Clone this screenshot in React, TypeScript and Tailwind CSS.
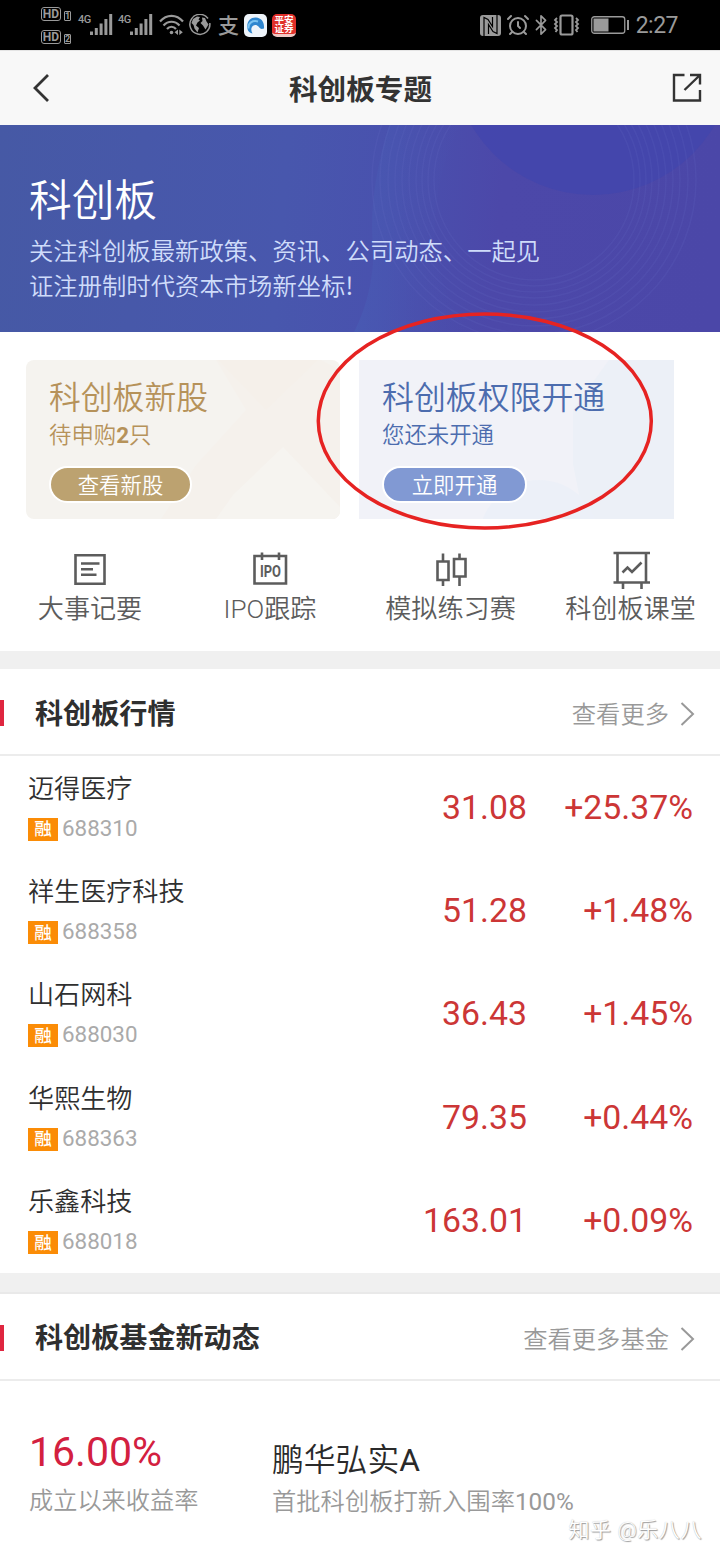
import type { ReactNode } from 'react';
import { AlarmClock, Bluetooth } from 'lucide-react';

interface Stock {
  name: string;
  code: string;
  price: string;
  change: string;
}

const stocks: Stock[] = [
  { name: '迈得医疗', code: '688310', price: '31.08', change: '+25.37%' },
  { name: '祥生医疗科技', code: '688358', price: '51.28', change: '+1.48%' },
  { name: '山石网科', code: '688030', price: '36.43', change: '+1.45%' },
  { name: '华熙生物', code: '688363', price: '79.35', change: '+0.44%' },
  { name: '乐鑫科技', code: '688018', price: '163.01', change: '+0.09%' },
];

const rings = [100, 106, 112, 118, 125, 132, 139, 146, 154, 162];

function HdBadge({ sim }: { sim: string }) {
  return (
    <div className="flex h-[14px] items-end gap-[3px]">
      <span className="flex h-[14px] w-5 items-center justify-center rounded-[3px] border-[1.5px] border-[#9a9a9a] text-[12px] leading-none font-bold">HD</span>
      <span className="flex h-[10px] w-[7px] items-center justify-center rounded-[1px] border border-[#9a9a9a] text-[9px] leading-none font-bold">{sim}</span>
    </div>
  );
}

function Signal() {
  return (
    <div className="flex h-[22px] w-[35px]">
      <span className="w-3 shrink-0 text-[11px] leading-[11px] font-medium tracking-[-0.5px]">4G</span>
      <svg className="h-[22px] w-[23px] shrink-0" viewBox="0 0 23 22" fill="#9a9a9a">
        <rect x="0" y="17.5" width="3" height="3.5" />
        <rect x="4.8" y="14" width="3" height="7" />
        <rect x="9.6" y="9.5" width="3" height="11.5" />
        <rect x="14.4" y="5" width="3" height="16" />
        <rect x="19.2" y="0" width="3" height="21" />
      </svg>
    </div>
  );
}

function StatusBar() {
  return (
    <div className="flex h-[50px] items-start bg-black font-normal text-[#9a9a9a]">
      <div className="mt-[7px] ml-[41px] flex w-[37px] flex-col gap-[9px]">
        <HdBadge sim="1" />
        <HdBadge sim="2" />
      </div>
      <div className="mt-[14px] flex gap-[5px]">
        <Signal />
        <Signal />
      </div>
      {/* wifi */}
      <svg className="mt-[13px] ml-[6px] h-6 w-[25px]" viewBox="0 0 25 24" fill="none" stroke="#9a9a9a" strokeWidth="2.200">
        <path d="M1 8.500C7.500 1 17.500 1 24 8.500M4.500 12.500C9 7.500 16 7.500 20.500 12.500M8 16C10.500 13 14.500 13 17 16" />
        <circle cx="12.500" cy="19.500" r="1.800" fill="#9a9a9a" stroke="none" />
        <path d="M19 16.500v5.500l-3.500-2.750zM20.300 16.500v5.500l3.500-2.750z" fill="#9a9a9a" stroke="none" />
      </svg>
      {/* globe */}
      <svg className="mt-[14px] ml-[5px] h-[22px] w-[22px]" viewBox="0 0 22 22" fill="none" stroke="#9a9a9a" strokeWidth="1.500">
        <path d="M19 4.500A10 10 0 1 0 20.800 9" />
        <path d="M4 5l4-2.500 3 .5-1.500 2.500 1.500 1-2.500 2-1.500 3 3 2.500-1.500 4.500-3-4-1-3.500-2-2zM13 3.500l3 .5 1.500 3.500 2 3-3 5-2.500-4-2.500-2.500 2-2z" fill="#9a9a9a" stroke="none" />
      </svg>
      <span className="mt-[15px] ml-[7px] w-[22px] text-[21px] leading-[22px] font-medium">支</span>
      <span className="mt-[14px] ml-1 flex h-[23px] w-[23px] items-center justify-center rounded-[5px] bg-[#eef4fa]">
        <svg className="h-[19px] w-[19px]" viewBox="0 0 19 19">
          <path d="M1.500 13C0 5 5 1 10 1.500 15.500 2 18.500 6 18 12.500 15 13.500 14 12.500 12.500 10.500 10.500 8 6.500 8.500 5.500 12 5 14 5.500 15.500 6.500 17.500 4 17 2 15.500 1.500 13z" fill="#2f86cf" />
          <path d="M2.500 12.500C2 7 6.500 4 12 5.500" fill="none" stroke="#7cc4f2" strokeWidth="2" />
        </svg>
      </span>
      <span className="mt-[14px] ml-[5px] flex h-[23px] w-6 flex-col items-center rounded-[5px] border-b-[3px] border-[#f0c8c4] bg-[#e0302a] pt-[1px] text-[9.500px] leading-[9px] font-bold text-white">
        <span>平安</span>
        <span>证券</span>
      </span>

      <div className="mt-[13px] mr-[42px] ml-auto flex h-6 items-center">
        {/* nfc */}
        <svg className="mr-[2px] h-[21px] w-[21px]" viewBox="0 0 21 21">
          <rect width="21" height="21" rx="3" fill="#9a9a9a" />
          <path d="M4 21V2.500L8 4.500l4.500 7V2M17 0v18.500l-4-2L8.500 9.500V19" fill="none" stroke="#000" strokeWidth="1.200" />
        </svg>
        <AlarmClock className="ml-[3px] h-6 w-6" strokeWidth={2} />
        <Bluetooth className="ml-0 h-6 w-[22px]" strokeWidth={1.8} />
        {/* vibrate */}
        <svg className="ml-px h-[22px] w-7" viewBox="0 0 28 22" fill="none" stroke="#9a9a9a">
          <rect x="7.500" y="1.500" width="12" height="19" rx="1.500" strokeWidth="2.200" />
          <path d="M4 4l-2 2 2 2-2 2 2 2-2 2 2 2-1.500 2M23 4l2 2-2 2 2 2-2 2 2 2-2 2 1.500 2" strokeWidth="1.800" />
        </svg>
        {/* battery */}
        <svg className="ml-[10px] h-[18px] w-[39px]" viewBox="0 0 39 18">
          <rect x=".75" y=".75" width="33" height="16.500" rx="2.500" fill="none" stroke="#9a9a9a" strokeWidth="1.300" />
          <rect x="2.500" y="2.500" width="15" height="13" fill="#9a9a9a" />
          <rect x="36" y="4" width="2" height="10" fill="#9a9a9a" />
        </svg>
        <span className="ml-[6px] pt-[2px] text-[23px] leading-6 tracking-[-0.5px]">2:27</span>
      </div>
    </div>
  );
}

function TitleBar() {
  return (
    <header className="flex h-[75px] items-center border-t border-[#e4e4e4] bg-[#f8f8f8] pr-[18px] pl-[33px]">
      <svg className="mb-px h-7 w-[29px]" viewBox="0 0 29 28" fill="none" stroke="#333" strokeWidth="2.800">
        <path d="M15 1L2 14l13 13" />
      </svg>
      <h1 className="flex-1 pt-[3px] pr-[13px] text-center text-[28.600px] leading-[40px] font-bold text-[#333]">科创板专题</h1>
      <svg className="mb-px h-[29px] w-[30px]" viewBox="0 0 30 29" fill="none" stroke="#333" strokeWidth="2.400">
        <path d="M12.500 2H2v25.500h26V17M18 2h10v9.500M28 2L12.500 17" />
      </svg>
    </header>
  );
}

function Hero() {
  return (
    <section className="relative h-[207px] overflow-hidden bg-[#4857a9]">
      <svg className="absolute inset-0 h-full w-full" viewBox="0 0 720 207">
        <defs>
          <linearGradient id="sky" x1="0" y1="0" x2="720" y2="60" gradientUnits="userSpaceOnUse">
            <stop offset="0" stopColor="#4659a5" />
            <stop offset="0.400" stopColor="#4857ad" />
            <stop offset="0.550" stopColor="#4951ae" />
            <stop offset="0.700" stopColor="#4c48a9" />
            <stop offset="1" stopColor="#4b47a8" />
          </linearGradient>
          <linearGradient id="edge" x1="0" y1="0" x2="1" y2="0">
            <stop offset="0" stopColor="#4862b8" stopOpacity="0.450" />
            <stop offset="1" stopColor="#4a50ae" stopOpacity="0" />
          </linearGradient>
        </defs>
        <rect width="720" height="207" fill="url(#sky)" />
        <path d="M389 0C374 50 370 90 373 120 375 150 366 185 354 207H470C420 150 430 60 460 0z" fill="url(#edge)" />
        <circle cx="593" cy="-71" r="141" fill="#4146ae" fillOpacity="0.750" />
        {rings.map((r) => (
          <circle key={r} cx="534" cy="55" r={r} fill="none" stroke="#6a70cc" strokeOpacity="0.150" strokeWidth="1.500" />
        ))}
      </svg>
      <div className="relative pt-[50px] pl-[29px]">
        <h2 className="text-[42.700px] leading-[52px] text-white">科创板</h2>
        <p className="mt-[7px] text-[24.350px] leading-[35px] text-[#cfdcfa]">
          关注科创板最新政策、资讯、公司动态、一起见
          <br />
          证注册制时代资本市场新坐标
          <span className="font-['Noto_Sans_CJK_SC',sans-serif] leading-none font-normal">!</span>
        </p>
      </div>
    </section>
  );
}

function Cards() {
  return (
    <section className="flex gap-[19px] px-[26px] pt-7">
      <div className="relative h-[159px] w-[314px] overflow-hidden rounded-lg bg-[#f5f3ef]">
        <svg className="absolute inset-0 h-full w-full" viewBox="0 0 314 159">
          <path d="M190 0h105L314 10V159H135L170 105 220 50z" fill="#f5f1ec" />
          <path d="M192 0h100L240 50z" fill="#f5f0ea" />
          <path d="M207 135l50-48 57 60v12H190z" fill="#f6f4f0" />
        </svg>
        <div className="relative pt-[17px] pl-[23px] text-[#b6925a]">
          <div className="text-[31.800px] leading-[42px]">科创板新股</div>
          <div className="text-[22.400px] leading-8">待申购<b>2</b>只</div>
          <div className="mt-[15px] flex h-[37px] w-[143px] items-center justify-center rounded-full border-2 border-white bg-[#bca270] pt-[2px] text-[21.400px] leading-8 text-white">查看新股</div>
        </div>
      </div>
      <div className="relative h-[159px] w-[315px] overflow-hidden bg-[#f1f2f8]">
        <svg className="absolute inset-0 h-full w-full" viewBox="0 0 315 159">
          <path d="M250 0h65v159H225L214 104V50z" fill="#ecf0f7" />
          <circle cx="180" cy="180" r="60" fill="#ecf0f8" />
        </svg>
        <div className="relative pt-[17px] pl-[23px] text-[#4c6cae]">
          <div className="text-[31.900px] leading-[42px]">科创板权限开通</div>
          <div className="text-[22.400px] leading-8">您还未开通</div>
          <div className="mt-[15px] flex h-[37px] w-[145px] items-center justify-center rounded-full border-2 border-white bg-[#8199d3] pt-[2px] text-[21.400px] leading-8 text-white">立即开通</div>
        </div>
      </div>
    </section>
  );
}

function Shortcut({ label, children }: { label: string; children: ReactNode }) {
  return (
    <div className="flex flex-col items-center">
      <svg className="h-10 w-10" viewBox="0 0 40 40" fill="none" stroke="#5c5c5c" strokeWidth="2.600">
        {children}
      </svg>
      <span className="mt-[1px] text-[26.100px] leading-9 whitespace-nowrap text-[#5c5c5c]">{label}</span>
    </div>
  );
}

function Shortcuts() {
  return (
    <section className="grid h-[132px] grid-cols-[180px_180px_181px_1fr] pt-[31px]">
      <Shortcut label="大事记要">
        <path d="M5.500 5.300h29v28.500h-29zM11 13.500h18.500M11 19.300h12M11 24.800h15.500" />
      </Shortcut>
      <Shortcut label="IPO跟踪">
        <path d="M4.500 6h31.500v27.500h-31.500zM12 2.500v7.500M29 2.500v7.500" />
        <text x="20.500" y="26.500" textAnchor="middle" textLength="21" lengthAdjust="spacingAndGlyphs" fontSize="16" fontWeight="700" fill="#5c5c5c" stroke="none">IPO</text>
      </Shortcut>
      <Shortcut label="模拟练习赛">
        <path d="M6.500 11.500h11v18.500h-11zM12 3.500v8M12 30v6M23 9h11.500v17.500H23zM28.500 3.500V9M28.500 26.500V36" />
      </Shortcut>
      <Shortcut label="科创板课堂">
        <path d="M2.500 3H39M2.500 32.500H39M6.500 3v29.500M35 3v29.500M12 32.500v6.500M30.500 32.500v6.500M11.500 22.500l5-5 4.500 4.500 9.500-9.500" />
      </Shortcut>
    </section>
  );
}

function SectionHeader({ title, more }: { title: string; more: string }) {
  return (
    <div className="flex h-[87px] items-center border-b-2 border-[#ececec] pt-[3px]">
      <span className="h-[26px] w-1 bg-[#df2640]" />
      <h3 className="ml-[31px] pt-[3px] text-[28.100px] leading-10 font-bold text-[#2f2f2f]">{title}</h3>
      <span className="ml-auto pt-[4px] text-[24.300px] leading-9 text-[#999]">{more}</span>
      <svg className="mt-[2px] mr-[25px] ml-[11px] h-6 w-[15px]" viewBox="0 0 15 24" fill="none" stroke="#999" strokeWidth="2">
        <path d="M1.500 1L13 12 1.500 23" />
      </svg>
    </div>
  );
}

function StockRow({ stock }: { stock: Stock }) {
  return (
    <div className="flex h-[103.400px] items-center pr-[27px] pl-7">
      <div className="flex-1 pb-[4px]">
        <div className="text-[26.100px] leading-9 text-[#2f2f2f]">{stock.name}</div>
        <div className="mt-[11px] flex h-[23px] items-center gap-1">
          <span className="flex h-[23px] w-[30px] items-center justify-center bg-[#fb8c06] text-[17.500px] leading-[22px] font-medium text-white">融</span>
          <span className="pb-[3px] text-[22.400px] leading-6 font-normal text-[#aaa]">{stock.code}</span>
        </div>
      </div>
      <span className="text-[33.800px] leading-10 font-normal text-[#cc3636]">{stock.price}</span>
      <span className="w-[166px] text-right text-[33.800px] leading-10 font-normal text-[#cc3636]">{stock.change}</span>
    </div>
  );
}

export default function App() {
  return (
    <div className="relative h-[1560px] w-[720px] overflow-hidden bg-white font-[Roboto,'Noto_Sans_CJK_SC',sans-serif] font-[350]">
      <StatusBar />
      <TitleBar />
      <Hero />
      <Cards />
      <Shortcuts />

      <div className="h-[18px] bg-[#f0f0f0]" />
      <SectionHeader title="科创板行情" more="查看更多" />
      <div>
        {stocks.map((stock) => (
          <StockRow key={stock.code} stock={stock} />
        ))}
      </div>

      <div className="h-[21px] border-b-2 border-[#e9e9e9] bg-[#f0f0f0]" />
      <SectionHeader title="科创板基金新动态" more="查看更多基金" />
      <section className="flex pt-[46px] pl-[29px]">
        <div className="w-[243px]">
          <div className="text-[41px] leading-[50px] font-normal text-[#d3203f]">16.00%</div>
          <div className="mt-[6px] text-[24.200px] leading-9 text-[#999]">成立以来收益率</div>
        </div>
        <div className="pt-[11px]">
          <div className="text-[31.800px] leading-[44px] text-[#2a2a2a]">
            鹏华弘实<span className="font-normal">A</span>
          </div>
          <div className="mt-[2px] text-[24.300px] leading-9 text-[#999]">
            首批科创板打新入围率<span className="font-normal">100%</span>
          </div>
        </div>
      </section>

      {/* watermark */}
      <div className="absolute right-[18px] bottom-[15px] text-[21px] leading-[30px] tracking-[0.6px] text-white [text-shadow:1px_1px_1px_#999,0_0_1px_#bbb]">知乎 @乐八八</div>

      {/* hand-drawn highlight around the account opening card */}
      <svg className="absolute top-[310px] left-[314px] h-[222px] w-[342px]" viewBox="0 0 342 222">
        <ellipse cx="170.800" cy="111" rx="166.500" ry="107" fill="none" stroke="#e62322" strokeWidth="3.500" />
      </svg>
    </div>
  );
}
